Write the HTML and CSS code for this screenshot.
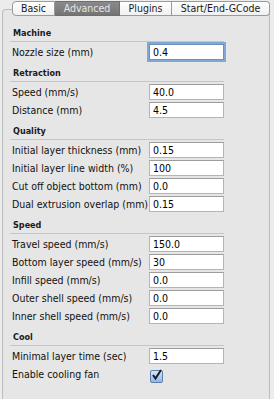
FILE: index.html
```html
<!DOCTYPE html>
<html lang="en">
<head>
    <meta charset="UTF-8">
    <title>Advanced settings</title>
    <link rel="stylesheet" href="styles.css">
</head>
<body>

<div class="tabs">
    <div class="tab tab-basic">Basic</div>
    <div class="tab tab-advanced active">Advanced</div>
    <div class="tab tab-plugins">Plugins</div>
    <div class="tab tab-gcode">Start/End-GCode</div>
</div>

<div class="panel">
    <div class="section-title">Machine</div>
    <div class="row">
        <label>Nozzle size (mm)</label>
        <input type="text" class="focused" value="0.4">
    </div>

    <div class="section-title">Retraction</div>
    <div class="row">
        <label>Speed (mm/s)</label>
        <input type="text" value="40.0">
    </div>
    <div class="row">
        <label>Distance (mm)</label>
        <input type="text" value="4.5">
    </div>

    <div class="section-title">Quality</div>
    <div class="row">
        <label>Initial layer thickness (mm)</label>
        <input type="text" value="0.15">
    </div>
    <div class="row">
        <label>Initial layer line width (%)</label>
        <input type="text" value="100">
    </div>
    <div class="row">
        <label>Cut off object bottom (mm)</label>
        <input type="text" value="0.0">
    </div>
    <div class="row">
        <label>Dual extrusion overlap (mm)</label>
        <input type="text" value="0.15">
    </div>

    <div class="section-title">Speed</div>
    <div class="row">
        <label>Travel speed (mm/s)</label>
        <input type="text" value="150.0">
    </div>
    <div class="row">
        <label>Bottom layer speed (mm/s)</label>
        <input type="text" value="30">
    </div>
    <div class="row">
        <label>Infill speed (mm/s)</label>
        <input type="text" value="0.0">
    </div>
    <div class="row">
        <label>Outer shell speed (mm/s)</label>
        <input type="text" value="0.0">
    </div>
    <div class="row">
        <label>Inner shell speed (mm/s)</label>
        <input type="text" value="0.0">
    </div>

    <div class="section-title">Cool</div>
    <div class="row">
        <label>Minimal layer time (sec)</label>
        <input type="text" value="1.5">
    </div>
    <div class="row">
        <label>Enable cooling fan</label>
        <span class="checkbox">
            <svg width="13" height="13" viewBox="0 0 13 13"><path d="M3 6 L5.5 9.5 L11 1" fill="none" stroke="#1a1a2a" stroke-width="2"/></svg>
        </span>
    </div>
</div>

</body>
</html>
```

FILE: styles.css
```css
body {
    font-family: 'DejaVu Sans Condensed', 'DejaVu Sans', sans-serif;
    font-size: 10.5px;
    color: #000;
    background-color: #ececec;
    margin: 0;
    padding: 1px 2px 0 2px;
    height: 398px;
    overflow: hidden;
}
.tabs {
    display: flex;
    margin-left: 10px;
    height: 15px;
    position: relative;
    z-index: 1;
}
.tab {
    height: 13px;
    line-height: 13px;
    text-align: center;
    border: 1px solid #9a9a9a;
    border-left: none;
    background: linear-gradient(#ffffff, #f0f0f0);
    font-size: 10.5px;
    color: #1a1a1a;
}
.tab-basic {
    width: 41px;
    border-left: 1px solid #9a9a9a;
    border-radius: 4px 0 0 4px;
}
.tab-advanced {
    width: 64px;
}
.tab-plugins {
    width: 51px;
}
.tab-gcode {
    width: 97px;
    border-radius: 0 4px 4px 0;
}
.tab.active {
    background: linear-gradient(#8a8a8a, #747474);
    color: #e6e6e6;
    border-color: #6e6e6e;
}
.panel {
    margin-top: -7px;
    border: 1px solid #bdbdbd;
    border-bottom: none;
    border-radius: 4px 4px 0 0;
    background-color: #e6e6e6;
    width: 268px;
    height: 400px;
    padding: 0 0 0 7px;
    box-sizing: border-box;
}
.section-title {
    width: 214px;
    height: 22px;
    box-sizing: border-box;
    border-bottom: 1px solid #c6c6c6;
    padding: 8px 0 0 3px;
    font-size: 9px;
    font-weight: bold;
    color: #1a1a1a;
}
.section-title:first-child {
    margin-top: 10px;
}
.row {
    display: flex;
    align-items: center;
    height: 16px;
    margin-top: 2px;
}
.row label {
    width: 137px;
    padding-left: 2px;
    white-space: nowrap;
    color: #111;
}
.row input {
    width: 75px;
    height: 16px;
    box-sizing: border-box;
    border: 1px solid #b4b4b4;
    border-top-color: #9c9c9c;
    background: #fff;
    padding: 0 3px;
    font-family: inherit;
    font-size: 10.5px;
    margin: 0;
    outline: none;
}
.row input.focused {
    box-shadow: 0 0 0 2px #7fa8d6;
    border-color: #6f90bf;
}
.checkbox {
    display: block;
    width: 13px;
    height: 13px;
    margin-top: 4px;
    margin-left: 1px;
    box-sizing: border-box;
    border: 1px solid #5d7fa8;
    border-radius: 2px;
    background: linear-gradient(#d6e6f8, #8fb8e6);
    position: relative;
}
.checkbox svg {
    position: absolute;
    left: -1px;
    top: -2px;
}
```
